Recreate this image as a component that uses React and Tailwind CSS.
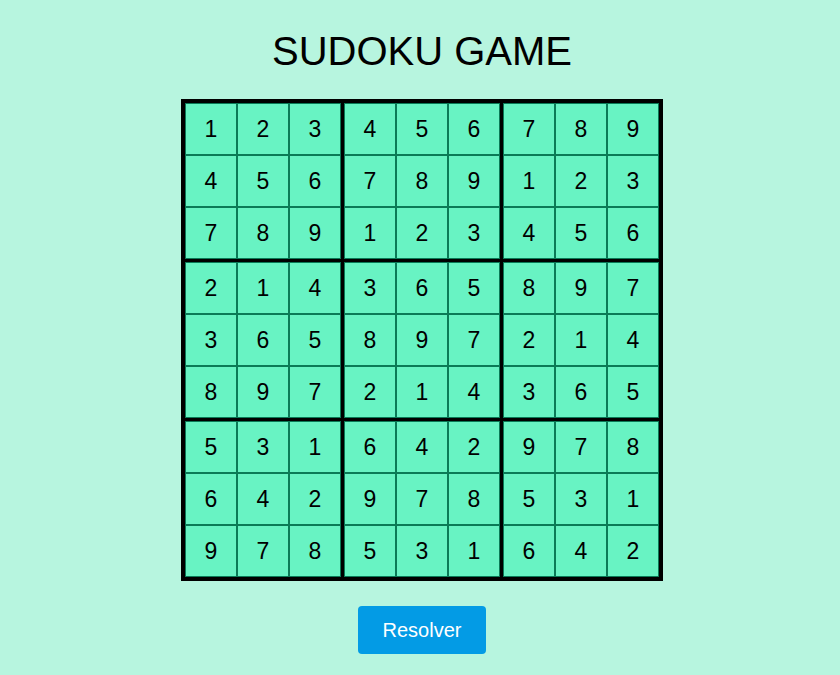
import React from 'react';

// sudoku board, rows of the solved grid
const BOARD = [
  [1, 2, 3, 4, 5, 6, 7, 8, 9],
  [4, 5, 6, 7, 8, 9, 1, 2, 3],
  [7, 8, 9, 1, 2, 3, 4, 5, 6],
  [2, 1, 4, 3, 6, 5, 8, 9, 7],
  [3, 6, 5, 8, 9, 7, 2, 1, 4],
  [8, 9, 7, 2, 1, 4, 3, 6, 5],
  [5, 3, 1, 6, 4, 2, 9, 7, 8],
  [6, 4, 2, 9, 7, 8, 5, 3, 1],
  [9, 7, 8, 5, 3, 1, 6, 4, 2],
];

const boxCells = (box) => {
  const r0 = Math.floor(box / 3) * 3;
  const c0 = (box % 3) * 3;
  const cells = [];
  for (let r = r0; r < r0 + 3; r++) {
    for (let c = c0; c < c0 + 3; c++) cells.push(BOARD[r][c]);
  }
  return cells;
};

const Box = ({ index }) => (
  <div className="grid grid-cols-3 gap-[2px] bg-[#0b7a57] p-px">
    {boxCells(index).map((n, i) => (
      <div
        key={i}
        className="w-[50px] h-[50px] flex items-center justify-center bg-[#68f3c3] text-[23px] text-black pt-px"
      >
        {n}
      </div>
    ))}
  </div>
);

export default function App() {
  return (
    <div
      className="min-h-[675px] w-full bg-[#b7f5df] flex flex-col items-center pt-[31px] pl-[4px]"
      style={{ fontFamily: '"Liberation Sans", Arial, sans-serif' }}
    >
      <h1 className="text-[40px] leading-none text-black">SUDOKU GAME</h1>
      <div className="mt-[28px] border-4 border-black bg-black grid grid-cols-3 gap-[3px]">
        {Array.from({ length: 9 }).map((_, i) => (
          <Box key={i} index={i} />
        ))}
      </div>
      <button className="mt-[25px] w-[128px] h-[48px] rounded bg-[#039be5] text-white text-[20px]">
        Resolver
      </button>
    </div>
  );
}
